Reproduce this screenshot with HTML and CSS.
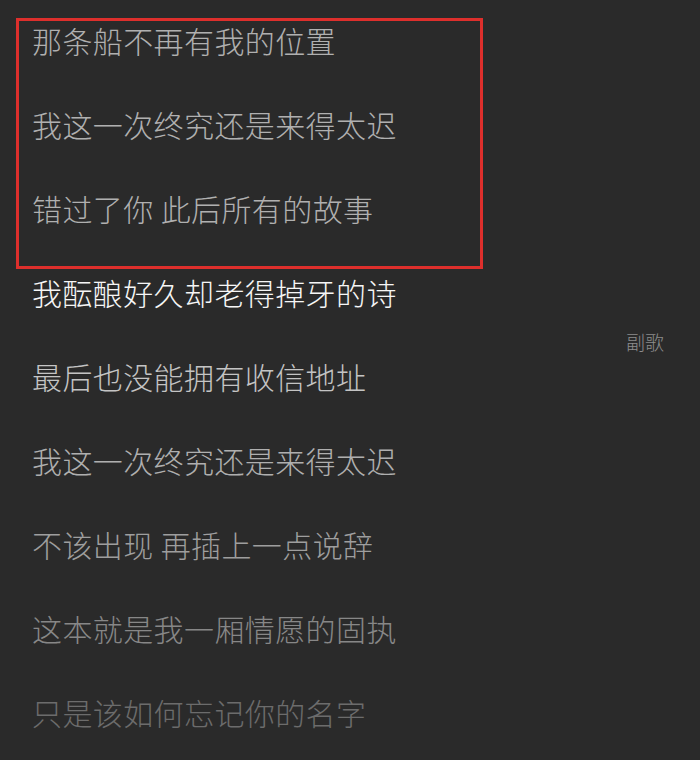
FILE: index.html
```html
<!DOCTYPE html>
<html lang="zh-CN">
<head>
  <meta charset="UTF-8" />
  <meta name="viewport" content="width=device-width, initial-scale=1" />
  <title>歌词</title>
  <link rel="stylesheet" href="styles.css">
</head>
<body>

  <main class="lyrics">
    <section class="marked">
      <p class="line line-past">那条船不再有我的位置</p>
      <p class="line line-past">我这一次终究还是来得太迟</p>
      <p class="line line-past">错过了你 此后所有的故事</p>
    </section>
    <p class="line line-current">我酝酿好久却老得掉牙的诗</p>
    <span class="tag">副歌</span>
    <p class="line line-next1">最后也没能拥有收信地址</p>
    <p class="line line-next2">我这一次终究还是来得太迟</p>
    <p class="line line-next3">不该出现 再插上一点说辞</p>
    <p class="line line-next4">这本就是我一厢情愿的固执</p>
    <p class="line line-next5">只是该如何忘记你的名字</p>
  </main>

</body>
</html>
```

FILE: styles.css
```css
/* Lyrics view, dark */
body {
  margin: 0;
  background: #2a2a2a;
  font-family: 'Noto Sans CJK SC', 'Noto Sans', sans-serif;
  height: 760px;
  overflow: hidden;
}

.lyrics {
  display: grid;
  grid-template-columns: 1fr auto;
  padding-right: 36px;
}

.marked {
  grid-column: 1;
  position: relative;
}

/* red annotation frame drawn over the first three lines */
.marked::after {
  content: '';
  position: absolute;
  top: 18px;
  left: 16px;
  width: 461px;
  height: 245px;
  border: 3px solid #dd2f2c;
}

.line {
  grid-column: 1;
  margin: -2px 0 2px;
  padding-left: 32px;
  height: 84px;
  line-height: 84px;
  font-size: 30px;
  font-weight: 300;
  letter-spacing: 0.4px;
  white-space: nowrap;
}

.line-past    { color: #b0b0b0; }
.line-current { color: #f6f6f6; }
.line-next1   { color: #c4c4c4; }
.line-next2   { color: #afafaf; }
.line-next3   { color: #9e9e9e; }
.line-next4   { color: #878787; }
.line-next5   { color: #6c6c6c; }

.tag {
  grid-column: 2;
  grid-row: 2 / 4;
  align-self: center;
  margin-top: 10px;
  font-size: 19px;
  font-weight: 300;
  color: #8c8c8c;
}
```
